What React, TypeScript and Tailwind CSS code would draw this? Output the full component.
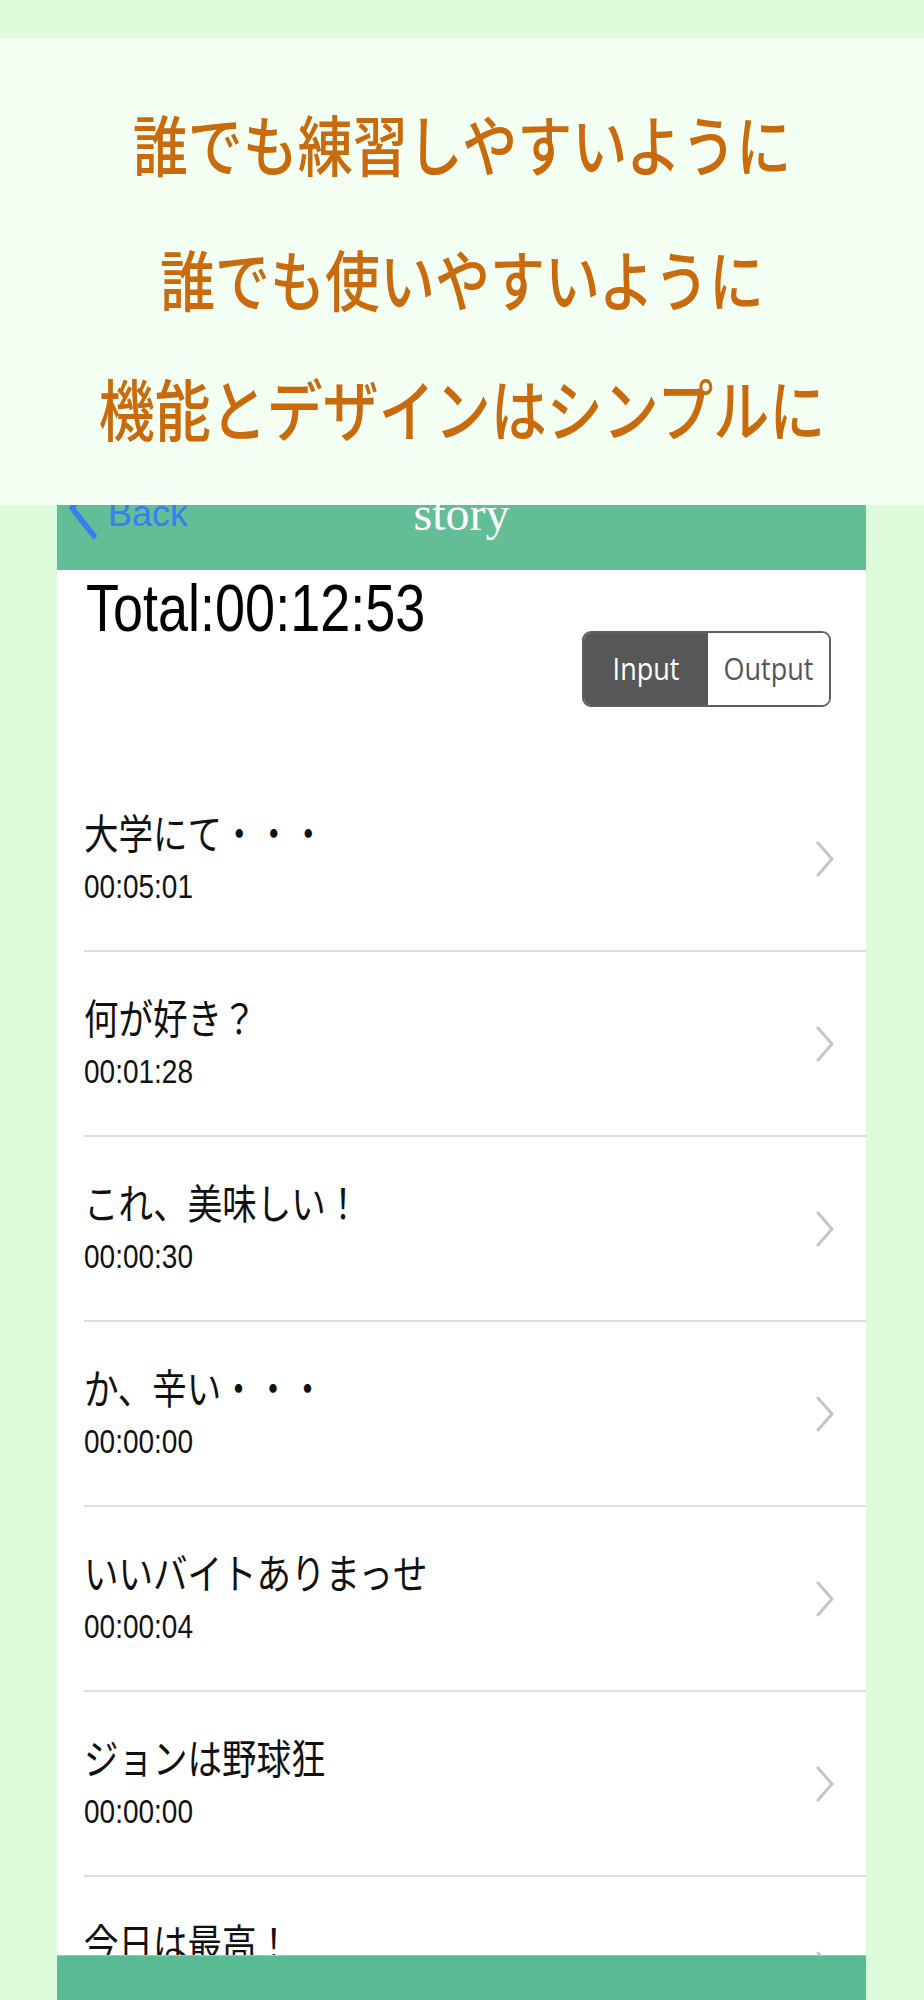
// Story list promo screen
const JP = "font-['Noto_Sans_CJK_JP','Noto_Sans',sans-serif]";

const ROWS = [
  { title: '大学にて・・・', time: '00:05:01' },
  { title: '何が好き？', time: '00:01:28' },
  { title: 'これ、美味しい！', time: '00:00:30' },
  { title: 'か、辛い・・・', time: '00:00:00' },
  { title: 'いいバイトありまっせ', time: '00:00:04' },
  { title: 'ジョンは野球狂', time: '00:00:00' },
  { title: '今日は最高！', time: '00:00:00' },
];

function Chevron() {
  return (
    <svg width="20" height="36" viewBox="0 0 20 36" fill="none">
      <path d="M3 2 L17 18 L3 34" stroke="#c4c4c9" strokeWidth="3" strokeLinecap="round" strokeLinejoin="round" />
    </svg>
  );
}

function StoryRow({ title, time }: { title: string; time: string }) {
  return (
    <div className="h-[185px] flex flex-col shrink-0">
      <div className="flex-1 flex items-center pl-[27px] pr-[31px]">
        <div className="flex-1 flex flex-col">
          <span className={`inline-block self-start origin-center scale-y-[1.2] text-[34.5px] leading-[44px] text-[#111] mt-[-4px] ${JP}`}>
            {title}
          </span>
          <span className="inline-block self-start origin-center scale-y-[1.2] text-[28px] leading-[34px] text-[#111] mt-[17px] font-['Liberation_Sans',Arial,sans-serif]">
            {time}
          </span>
        </div>
        <Chevron />
      </div>
      <div className="ml-[27px] h-[2px] bg-[#dedede]" />
    </div>
  );
}

export default function App() {
  return (
    <div className="w-[924px] h-[2000px] bg-[#dcfcdc] flex flex-col overflow-hidden">
      {/* Top strip */}
      <div className="h-[38px] shrink-0" />

      {/* Banner */}
      <div className={`h-[467px] shrink-0 bg-[#f2fff2] flex flex-col items-center pt-[68px] text-[#c96a0d] font-medium text-[55px] leading-[72px] ${JP}`}>
        <span className="inline-block origin-center scale-y-[1.2]">誰でも練習しやすいように</span>
        <span className="inline-block origin-center scale-y-[1.2] mt-[63px]">誰でも使いやすいように</span>
        <span className="inline-block origin-center scale-y-[1.2] mt-[58px] text-[56px]">機能とデザインはシンプルに</span>
      </div>

      {/* App frame */}
      <div className="ml-[57px] w-[809px] flex-1 bg-white flex flex-col overflow-hidden">
        {/* Nav bar */}
        <div className="relative h-[65px] shrink-0 bg-[#63bd96] overflow-hidden">
          <div className="flex items-start pl-[10px]">
            <svg width="32" height="56" viewBox="0 0 32 56" className="mt-[-20px] shrink-0 overflow-visible">
              <path d="M27 -6 L5 23 L27 51" stroke="#3b7cf0" strokeWidth="5.5" strokeLinecap="round" strokeLinejoin="round" fill="none" />
            </svg>
            <span className="ml-[9px] mt-[-9px] text-[36px] leading-[36px] text-[#3b7cf0] font-['Liberation_Sans',Arial,sans-serif]">
              Back
            </span>
          </div>
          <div className="absolute inset-x-0 top-[-15px] text-center text-[48px] leading-[48px] text-white font-['Liberation_Serif','Times_New_Roman',serif]">
            story
          </div>
        </div>

        {/* Content */}
        <div className="flex-1 flex flex-col overflow-hidden">
          <div className="h-[197px] shrink-0 flex flex-col">
            <span className="inline-block self-start origin-center scale-y-[1.22] ml-[29px] mt-[10px] text-[54px] leading-[56px] text-black font-['Liberation_Sans',Arial,sans-serif]">
              Total:00:12:53
            </span>
            <div className="self-end mr-[35px] mt-[-5px] flex w-[249px] h-[76px] rounded-[9px] border-2 border-[#5e5e5e] overflow-hidden font-['Open_Sans','Noto_Sans',sans-serif] text-[27px]">
              <div className="w-[124px] bg-[#575757] text-white flex items-center justify-center">
                <span className="inline-block scale-y-[1.15]">Input</span>
              </div>
              <div className="flex-1 bg-white text-[#555] flex items-center justify-center">
                <span className="inline-block scale-y-[1.15]">Output</span>
              </div>
            </div>
          </div>
          {ROWS.map((r) => (
            <StoryRow key={r.title} title={r.title} time={r.time} />
          ))}
        </div>

        {/* Bottom bar */}
        <div className="h-[45px] shrink-0 bg-[#58bb93] border-t border-[#8fd3b5]" />
      </div>
    </div>
  );
}
